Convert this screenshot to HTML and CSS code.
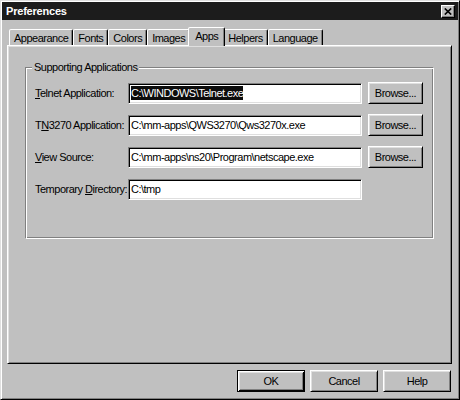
FILE: index.html
```html
<!DOCTYPE html>
<html>
<head>
<meta charset="utf-8">
<title>Preferences</title>
<link rel="stylesheet" href="styles.css">
</head>
<body>
<div class="window">
  <div class="titlebar">
    <span class="title">Preferences</span>
    <span class="close"><svg width="8" height="7" viewBox="0 0 8 7"><path d="M0.8 0.5 L7.2 6.5 M7.2 0.5 L0.8 6.5" stroke="#000" stroke-width="1.7" fill="none"/></svg></span>
  </div>
  <div class="content">
    <div class="tabs">
      <div class="tab">Appearance</div>
      <div class="tab">Fonts</div>
      <div class="tab">Colors</div>
      <div class="tab">Images</div>
      <div class="tab active">Apps</div>
      <div class="tab">Helpers</div>
      <div class="tab">Language</div>
    </div>
    <div class="panel">
      <div class="group">
        <div class="group-title">Supporting Applications</div>
        <div class="rows">
          <div class="label"><u>T</u>elnet Application:</div>
          <div class="field"><span class="sel">C:\WINDOWS\Telnet.exe</span></div>
          <div class="btn">Browse...</div>

          <div class="label">T<u>N</u>3270 Application:</div>
          <div class="field">C:\mm-apps\QWS3270\Qws3270x.exe</div>
          <div class="btn">Browse...</div>

          <div class="label"><u>V</u>iew Source:</div>
          <div class="field">C:\mm-apps\ns20\Program\netscape.exe</div>
          <div class="btn">Browse...</div>

          <div class="label">Temporary <u>D</u>irectory:</div>
          <div class="field">C:\tmp</div>
        </div>
      </div>
    </div>
    <div class="buttons">
      <div class="btn default">OK</div>
      <div class="btn">Cancel</div>
      <div class="btn">Help</div>
    </div>
  </div>
</div>
</body>
</html>
```

FILE: styles.css
```css
* { box-sizing: border-box; }
html, body { margin: 0; padding: 0; }
body {
  width: 460px;
  height: 400px;
  background: #c0c0c0;
  font-family: "Liberation Sans", Arial, sans-serif;
  font-size: 11px;
  letter-spacing: -0.5px;
  color: #000;
}
.window {
  width: 460px;
  height: 400px;
  background: #c0c0c0;
  border: 1px solid;
  border-color: #dfdfdf #000 #000 #dfdfdf;
  box-shadow: inset 1px 1px #fff, inset -1px -1px #808080;
  padding: 1px;
  display: flex;
  flex-direction: column;
}
.titlebar {
  height: 18px;
  flex: none;
  background: #1c1c1c;
  display: flex;
  align-items: center;
  justify-content: space-between;
  padding: 0 3px 0 4px;
}
.title {
  color: #fff;
  font-weight: bold;
  font-size: 11px;
  letter-spacing: -0.2px;
}
.close {
  width: 14px;
  height: 13px;
  background: #c0c0c0;
  border: 1px solid;
  border-color: #fff #000 #000 #fff;
  box-shadow: inset -1px -1px #808080;
  display: flex;
  align-items: center;
  justify-content: center;
}
.close svg { display: block; }
.content {
  flex: 1;
  padding: 7px 6px 0 5px;
  display: flex;
  flex-direction: column;
}
.tabs {
  display: flex;
  align-items: flex-end;
  height: 18px;
  padding-left: 2px;
  position: relative;
  z-index: 1;
}
.tab {
  height: 16px;
  padding: 0 4px;
  border: 1px solid;
  border-bottom: none;
  border-color: #fff #000 transparent #fff;
  box-shadow: inset -1px 0 #808080;
  border-radius: 2px 2px 0 0;
  display: flex;
  align-items: center;
  background: #c0c0c0;
}
.tab.active {
  height: 19px;
  margin: 0 -2px -1px;
  padding: 0 6px 2px;
  position: relative;
  z-index: 2;
}
.panel {
  height: 319px;
  flex: none;
  border: 1px solid;
  border-color: #fff #000 #000 #fff;
  box-shadow: inset 1px 1px #dfdfdf, inset -1px -1px #808080;
  padding: 21px 0 0 17px;
}
.group {
  width: 409px;
  height: 172px;
  border: 1px solid;
  border-color: #808080 #fff #fff #808080;
  box-shadow: inset 1px 1px #fff, inset -1px -1px #808080;
}
.group-title {
  width: max-content;
  margin: -7px 0 0 6px;
  padding: 0 2px;
  line-height: 13px;
  background: #c0c0c0;
}
.rows {
  margin-top: 8px;
  padding-left: 9px;
  display: grid;
  grid-template-columns: 87px 234px 55px;
  grid-auto-rows: 22px;
  column-gap: 6px;
  row-gap: 10px;
  align-items: center;
}
.label { white-space: nowrap; }
.field {
  height: 21px;
  background: #fff;
  border: 1px solid;
  border-color: #808080 #fff #fff #808080;
  box-shadow: inset 1px 1px #000, inset -1px -1px #dfdfdf;
  padding: 0 2px;
  display: flex;
  align-items: center;
  white-space: nowrap;
  overflow: hidden;
}
.sel {
  background: #0c0c0c;
  color: #fff;
  line-height: 14px;
}
.btn {
  height: 22px;
  background: #c0c0c0;
  border: 1px solid;
  border-color: #fff #000 #000 #fff;
  box-shadow: inset 1px 1px #dfdfdf, inset -1px -1px #808080;
  display: flex;
  align-items: center;
  justify-content: center;
}
.buttons {
  margin-top: 6px;
  padding-right: 1px;
  display: flex;
  justify-content: flex-end;
  gap: 5px;
}
.buttons .btn { width: 68px; }
.btn.default {
  border-color: #000;
  box-shadow: inset 1px 1px #fff, inset -1px -1px #000, inset 2px 2px #dfdfdf, inset -2px -2px #808080;
}
```
